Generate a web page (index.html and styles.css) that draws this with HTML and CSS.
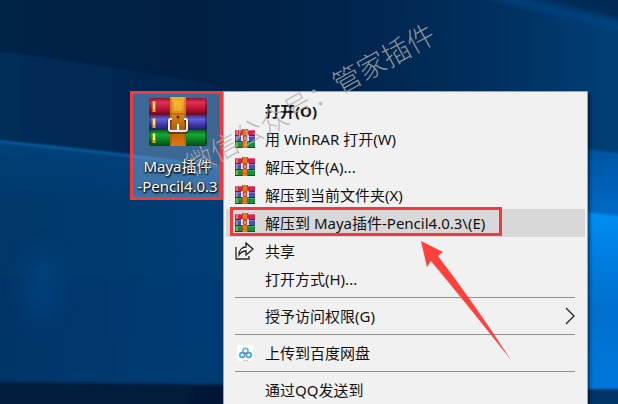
FILE: index.html
```html
<!DOCTYPE html>
<html lang="zh-CN">
<head>
<meta charset="utf-8">
<title>桌面</title>
<link rel="stylesheet" href="styles.css">
</head>
<body>
<svg class="defs" width="0" height="0" aria-hidden="true">
  <defs>
    <linearGradient id="red" x1="0" y1="0" x2="0" y2="1"><stop offset="0" stop-color="#8c1530"/><stop offset=".25" stop-color="#e03058"/><stop offset=".6" stop-color="#c01538"/><stop offset="1" stop-color="#690a20"/></linearGradient>
    <linearGradient id="violet" x1="0" y1="0" x2="0" y2="1"><stop offset="0" stop-color="#38308c"/><stop offset=".3" stop-color="#6660d8"/><stop offset=".6" stop-color="#403cb0"/><stop offset="1" stop-color="#211d66"/></linearGradient>
    <linearGradient id="green" x1="0" y1="0" x2="0" y2="1"><stop offset="0" stop-color="#0a6420"/><stop offset=".3" stop-color="#18a838"/><stop offset=".6" stop-color="#088424"/><stop offset="1" stop-color="#044812"/></linearGradient>
    <linearGradient id="strap" x1="0" y1="0" x2="0" y2="1"><stop offset="0" stop-color="#f5b020"/><stop offset=".3" stop-color="#e09018"/><stop offset=".65" stop-color="#b85c08"/><stop offset="1" stop-color="#e07810"/></linearGradient>
    <symbol id="books" viewBox="0 0 58 50">
      <rect x="0" y="1" width="58" height="17" rx="2" fill="url(#red)"/>
      <rect x="0" y="18" width="58" height="15" rx="2" fill="url(#violet)"/>
      <rect x="0" y="33" width="58" height="16" rx="2" fill="url(#green)"/>
      <path d="M5 4v11M5 21v10M5 36v10" stroke="#e8a020" stroke-width="3"/>
      <path d="M5 5v7M5 22v6M5 37v6" stroke="#ffe878" stroke-width="2"/>
      <path d="M1 3v44" stroke="#000" stroke-opacity=".2" stroke-width="2"/>
      <path d="M57 3v44" stroke="#000" stroke-opacity=".3" stroke-width="2"/>
      <rect x="21" y="0" width="16" height="49" rx="1" fill="url(#strap)"/>
      <path d="M22 1v47M36 1v47" stroke="#804006" stroke-opacity=".55"/>
      <path d="M29 4v10" stroke="#ffe060" stroke-opacity=".3" stroke-width="8"/>
      <path d="M22 17h14" stroke="#804006" stroke-opacity=".6"/>
      <circle cx="29" cy="20" r="1.500" fill="#5c2804"/>
      <path d="M23 23H21q-1 0-1 1v9q0 2 2 2h14q2 0 2-2v-9q0-1-1-1h-2" fill="none" stroke="#3c2020" stroke-opacity=".6" stroke-width="4"/>
      <path d="M23 22H21q-1 0-1 1v9q0 2 2 2h14q2 0 2-2v-9q0-1-1-1h-2" fill="none" stroke="#f0eeee" stroke-width="2"/>
      <path d="M29 27v7" stroke="#fff" stroke-width="2"/>
    </symbol>
    <symbol id="rar" viewBox="0 0 20 20">
      <rect y="1" width="20" height="6" fill="#cc2454"/><path d="M0 1.500H20" stroke="#e85880"/><path d="M0 6.500H20" stroke="#841436"/>
      <rect y="7" width="20" height="6" fill="#4a50b8"/><path d="M0 7.500H20" stroke="#7478d0"/><path d="M0 12.500H20" stroke="#28306c"/>
      <rect y="13" width="20" height="6" fill="#168c3c"/><path d="M0 13.500H20" stroke="#38ad58"/><path d="M0 18.500H20" stroke="#07501c"/>
      <path d="M2 2v4M2 8v4M2 14v4" stroke="#f5d050"/>
      <rect x="7" width="6" height="19" fill="#e47818"/><path d="M7.500 0v19M12.500 0v19" stroke="#b05010"/>
      <rect x="7" y="6" width="6" height="6" fill="#c05030"/>
      <path d="M7 6v6M13 6v6" stroke="#fff" stroke-width="1.500"/><path d="M10 8v3" stroke="#fff" stroke-opacity=".7"/><path d="M6 11.500h2M12 11.500h2" stroke="#fff"/>
    </symbol>
  </defs>
</svg>

<svg class="wallpaper" viewBox="0 0 618 404" preserveAspectRatio="none" aria-hidden="true">
  <defs>
    <linearGradient id="sky"><stop offset="0" stop-color="#002347"/><stop offset=".3" stop-color="#001f43"/><stop offset=".6" stop-color="#00264f"/><stop offset=".8" stop-color="#00305f"/><stop offset="1" stop-color="#003f76"/></linearGradient>
    <linearGradient id="upper"><stop offset="0" stop-color="#002e59"/><stop offset=".6" stop-color="#00274f"/><stop offset="1" stop-color="#00234a"/></linearGradient>
    <linearGradient id="beam" x1="0" y1="0" x2="0" y2="1"><stop offset="0" stop-color="#004178"/><stop offset=".25" stop-color="#00386b"/><stop offset="1" stop-color="#003568"/></linearGradient>
    <linearGradient id="glow"><stop offset="0" stop-color="#004584" stop-opacity="0"/><stop offset="1" stop-color="#004584" stop-opacity=".5"/></linearGradient>
    <linearGradient id="right" x1="0" y1="0" x2="0" y2="1"><stop offset="0" stop-color="#0054a2"/><stop offset=".25" stop-color="#0069c4"/><stop offset="1" stop-color="#006cc8"/></linearGradient>
    <linearGradient id="bright" x1="0" y1="0" x2="0" y2="1"><stop offset="0" stop-color="#0790f5"/><stop offset=".2" stop-color="#0080e4"/><stop offset=".5" stop-color="#0070cf"/><stop offset="1" stop-color="#0078df"/></linearGradient>
    <linearGradient id="floor"><stop offset="0" stop-color="#001c3e"/><stop offset="1" stop-color="#001937"/></linearGradient>
    <filter id="edge"><feGaussianBlur stdDeviation="1"/></filter>
    <filter id="soft" x="-20%" y="-50%" width="140%" height="200%"><feGaussianBlur stdDeviation="3"/></filter>
    <filter id="haze" x="-100%" y="-50%" width="300%" height="200%"><feGaussianBlur stdDeviation="10"/></filter>
  </defs>
  <rect width="618" height="404" fill="url(#sky)"/>
  <path d="M-9 51Q100 63 260 93V180H-9z" fill="url(#upper)" filter="url(#edge)"/>
  <path d="M510-9L640 25V-9z" fill="#002c57" filter="url(#soft)"/>
  <path d="M480-8L640 31" fill="none" stroke="#00498a" stroke-width="6" opacity=".7" filter="url(#soft)"/>
  <path d="M-9 140Q120 152 260 172V388H-9z" fill="url(#beam)" filter="url(#edge)"/>
  <path d="M0 140Q120 153 260 173V388H0z" fill="url(#glow)"/>
  <path d="M-9 141Q120 153 260 173" fill="none" stroke="#085597" stroke-width="3" filter="url(#edge)"/>
  <ellipse cx="42" cy="285" rx="18" ry="36" fill="#004785" opacity=".5" filter="url(#haze)"/>
  <path d="M570 148L630 154V404H570z" fill="url(#right)" filter="url(#edge)"/>
  <path d="M570 211L630 217V404H570z" fill="url(#bright)" filter="url(#edge)"/>
  <path d="M-9 382L260 385V410H-9z" fill="url(#floor)" filter="url(#edge)"/>
  <path d="M570 389H640V414H570z" fill="#003568" filter="url(#edge)"/>
</svg>

<main class="desktop">
  <a class="shortcut" href="#">
    <svg class="shortcut-icon" aria-hidden="true"><use href="#books"/></svg>
    <span class="shortcut-name">Maya插件<br>-Pencil4.0.3</span>
  </a>

  <nav class="menu" aria-label="右键菜单">
    <button class="item default">打开(O)</button>
    <button class="item"><svg class="icon"><use href="#rar"/></svg>用 WinRAR 打开(W)</button>
    <button class="item"><svg class="icon"><use href="#rar"/></svg>解压文件(A)...</button>
    <button class="item"><svg class="icon"><use href="#rar"/></svg>解压到当前文件夹(X)</button>
    <button class="item active"><svg class="icon"><use href="#rar"/></svg><span class="marked">解压到 Maya插件-Pencil4.0.3\(E)</span></button>
    <button class="item"><svg class="icon" viewBox="0 0 20 20" fill="none" stroke="#222" stroke-width="1.300"><path d="M1 6v12h13v-3M4 14c0-5 3-8 7-8V2l7 6-7 6v-4c-3 0-5 1-7 4z"/></svg>共享</button>
    <button class="item">打开方式(H)...</button>
    <hr class="rule">
    <button class="item">授予访问权限(G)<svg class="chevron" viewBox="0 0 10 18" fill="none" stroke="#222" stroke-width="1.300"><path d="M1 1l8 8-8 8"/></svg></button>
    <hr class="rule">
    <button class="item"><svg class="icon" viewBox="0 0 20 20" fill="none" stroke-width="1.600"><rect x="2" y="2" width="16" height="16" rx="3" fill="#fff"/><circle cx="10.500" cy="8" r="2.600" stroke="#58b8ee"/><circle cx="7.200" cy="12" r="2.400" stroke="#35a8ee"/><circle cx="13.800" cy="12" r="2.400" stroke="#35a8ee"/><path d="M8.200 9.200q2.300 2.500 4.600 0" stroke="#ee5268"/><path d="M8 17.500h5" stroke="#e9bcc8" stroke-width="1"/></svg>上传到百度网盘</button>
    <hr class="rule">
    <button class="item">通过QQ发送到</button>
  </nav>

  <svg class="arrow" viewBox="0 0 92 120" aria-hidden="true"><path d="M0 0L22 11L17 15Q53 62 90 119Q49 67 10 20L6 26Z" fill="#ff403d"/></svg>
  <div class="watermark">微信公众号：管家插件</div>
</main>
</body>
</html>
```

FILE: styles.css
```css
*, *::after { box-sizing: border-box; }
body {
  margin: 0;
  overflow: hidden;
  background: #00284f;
  font-family: "Noto Sans", "Noto Sans CJK SC", sans-serif;
  font-size: 15px;
}
.defs { position: absolute; }
.wallpaper {
  position: absolute;
  inset: 0;
  width: 100%;
  height: 100%;
}
.desktop {
  position: relative;
  height: 100vh;
  overflow: hidden;
}
.shortcut {
  position: absolute;
  left: 130px;
  top: 91px;
  display: flex;
  flex-direction: column;
  align-items: center;
  width: 93px;
  height: 109px;
  padding: 3px 0 0 2px;
  border: 3px solid #f23a3c;
  background: rgba(120, 170, 220, .5);
  color: #fff;
  text-decoration: none;
}
.shortcut-icon { width: 58px; height: 50px; flex: none; }
.shortcut-name {
  margin-top: 9px;
  line-height: 20px;
  text-align: center;
  white-space: nowrap;
  text-shadow: 1px 1px 2px #000, 0 1px 2px #000;
}
.menu {
  position: absolute;
  left: 223px;
  top: 91px;
  width: 365px;
  padding: 5px 2px;
  border: 1px solid #a0a4a8;
  background: #f1f1f1;
  box-shadow: 2px 2px 3px rgba(0, 0, 0, .5);
}
.item {
  position: relative;
  display: flex;
  align-items: center;
  width: 100%;
  height: 28px;
  padding: 0 10px 0 39px;
  border: 0;
  background: none;
  color: #111;
  font: inherit;
  line-height: 28px;
  text-align: left;
  white-space: pre;
}
.default { font-weight: 700; }
.active { background: #d8d8d8; }
.icon {
  position: absolute;
  left: 9px;
  top: 4px;
  width: 20px;
  height: 20px;
}
.chevron { width: 10px; height: 18px; margin-left: auto; }
.marked::after {
  content: "";
  position: absolute;
  left: 4px;
  top: -2px;
  width: 272px;
  height: 29px;
  border: 3px solid #f23a3c;
}
.rule {
  height: 1px;
  margin: 4px 10px 4px 9px;
  border: 0;
  background: #919191;
}
.arrow {
  position: absolute;
  left: 421px;
  top: 241px;
  width: 92px;
  height: 120px;
}
.watermark {
  position: absolute;
  left: 310px;
  top: 99px;
  transform: translate(-50%, -50%) rotate(-29deg);
  color: rgba(175, 175, 175, .8);
  font-size: 28px;
  font-weight: 300;
  line-height: 40px;
  white-space: nowrap;
  pointer-events: none;
}
```
